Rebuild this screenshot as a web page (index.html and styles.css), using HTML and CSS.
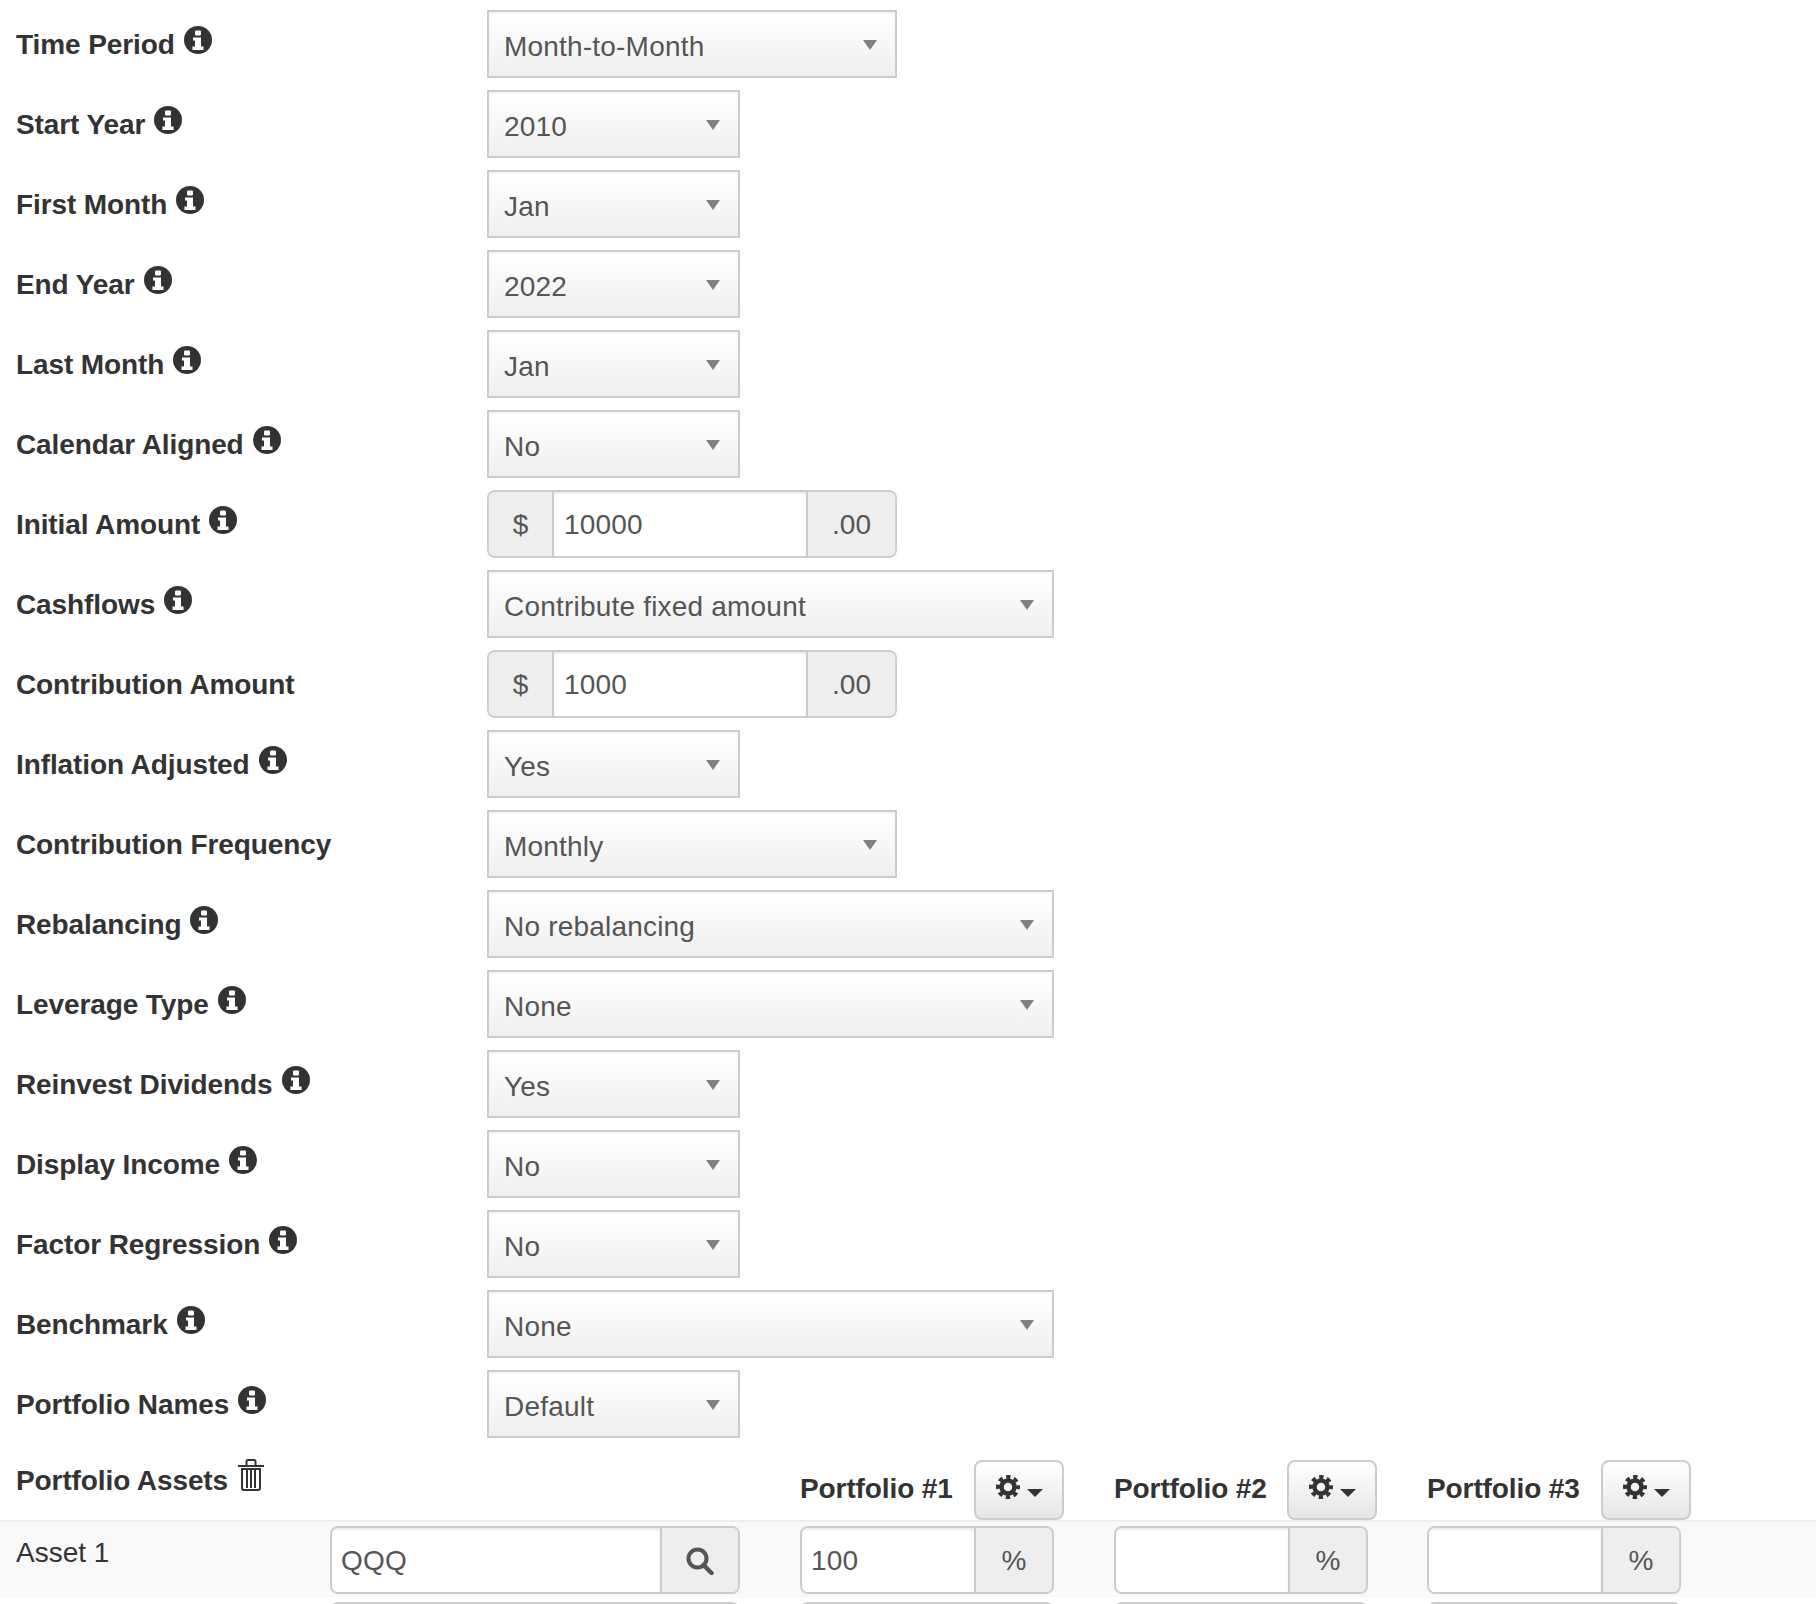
FILE: index.html
```html
<!DOCTYPE html>
<html lang="en">
<head>
    <meta charset="UTF-8">
    <title>Backtest Portfolio</title>
    <link rel="stylesheet" href="styles.css">
</head>
<body>
    <svg class="sprites" width="0" height="0">
        <symbol id="i-info" viewBox="0 0 28 28">
            <circle cx="14" cy="14" r="14" fill="#333"/>
            <rect x="11" y="4.500" width="6" height="5" rx="1" fill="#fff"/>
            <path d="M9 11.500h8v9h2.500v3.500h-11v-3.500H11v-6H9z" fill="#fff"/>
        </symbol>
        <symbol id="i-cog" viewBox="0 0 24 24">
            <circle cx="12" cy="12" r="6.500" fill="none" stroke="#333" stroke-width="4.500"/>
            <circle cx="12" cy="12" r="10" fill="none" stroke="#333" stroke-width="4" stroke-dasharray="4.300 3.554" stroke-dashoffset="2.150"/>
        </symbol>
        <symbol id="i-search" viewBox="0 0 28 28">
            <circle cx="11.500" cy="11.500" r="9" fill="none" stroke="#555" stroke-width="4"/>
            <path d="M17.500 18l8 8" stroke="#555" stroke-width="4.500" stroke-linecap="round"/>
        </symbol>
        <symbol id="i-trash" viewBox="0 0 26 32">
            <path d="M0 7h26M8.500 6V2.500a1.500 1.500 0 0 1 1.500-1.500h6a1.500 1.500 0 0 1 1.500 1.500V6" fill="none" stroke="#333" stroke-width="2"/>
            <path d="M4 10v19a2 2 0 0 0 2 2h14a2 2 0 0 0 2-2V10zM9 11v18M13 11v18M17 11v18" fill="none" stroke="#333" stroke-width="2"/>
        </symbol>
    </svg>

    <form class="backtest-form">
        <div class="form-row">
            <label class="row-label">Time Period <svg class="icon-info"><use href="#i-info"/></svg></label>
            <div class="select-box size-md"><select><option>Month-to-Month</option></select></div>
        </div>
        <div class="form-row">
            <label class="row-label">Start Year <svg class="icon-info"><use href="#i-info"/></svg></label>
            <div class="select-box size-sm"><select><option>2010</option></select></div>
        </div>
        <div class="form-row">
            <label class="row-label">First Month <svg class="icon-info"><use href="#i-info"/></svg></label>
            <div class="select-box size-sm"><select><option>Jan</option></select></div>
        </div>
        <div class="form-row">
            <label class="row-label">End Year <svg class="icon-info"><use href="#i-info"/></svg></label>
            <div class="select-box size-sm"><select><option>2022</option></select></div>
        </div>
        <div class="form-row">
            <label class="row-label">Last Month <svg class="icon-info"><use href="#i-info"/></svg></label>
            <div class="select-box size-sm"><select><option>Jan</option></select></div>
        </div>
        <div class="form-row">
            <label class="row-label">Calendar Aligned <svg class="icon-info"><use href="#i-info"/></svg></label>
            <div class="select-box size-sm"><select><option>No</option></select></div>
        </div>
        <div class="form-row">
            <label class="row-label">Initial Amount <svg class="icon-info"><use href="#i-info"/></svg></label>
            <div class="input-group size-md">
                <span class="addon addon-dollar">$</span>
                <input type="text" class="amount" value="10000">
                <span class="addon addon-cents">.00</span>
            </div>
        </div>
        <div class="form-row">
            <label class="row-label">Cashflows <svg class="icon-info"><use href="#i-info"/></svg></label>
            <div class="select-box size-lg"><select><option>Contribute fixed amount</option></select></div>
        </div>
        <div class="form-row">
            <label class="row-label">Contribution Amount</label>
            <div class="input-group size-md">
                <span class="addon addon-dollar">$</span>
                <input type="text" class="amount" value="1000">
                <span class="addon addon-cents">.00</span>
            </div>
        </div>
        <div class="form-row">
            <label class="row-label">Inflation Adjusted <svg class="icon-info"><use href="#i-info"/></svg></label>
            <div class="select-box size-sm"><select><option>Yes</option></select></div>
        </div>
        <div class="form-row">
            <label class="row-label">Contribution Frequency</label>
            <div class="select-box size-md"><select><option>Monthly</option></select></div>
        </div>
        <div class="form-row">
            <label class="row-label">Rebalancing <svg class="icon-info"><use href="#i-info"/></svg></label>
            <div class="select-box size-lg"><select><option>No rebalancing</option></select></div>
        </div>
        <div class="form-row">
            <label class="row-label">Leverage Type <svg class="icon-info"><use href="#i-info"/></svg></label>
            <div class="select-box size-lg"><select><option>None</option></select></div>
        </div>
        <div class="form-row">
            <label class="row-label">Reinvest Dividends <svg class="icon-info"><use href="#i-info"/></svg></label>
            <div class="select-box size-sm"><select><option>Yes</option></select></div>
        </div>
        <div class="form-row">
            <label class="row-label">Display Income <svg class="icon-info"><use href="#i-info"/></svg></label>
            <div class="select-box size-sm"><select><option>No</option></select></div>
        </div>
        <div class="form-row">
            <label class="row-label">Factor Regression <svg class="icon-info"><use href="#i-info"/></svg></label>
            <div class="select-box size-sm"><select><option>No</option></select></div>
        </div>
        <div class="form-row">
            <label class="row-label">Benchmark <svg class="icon-info"><use href="#i-info"/></svg></label>
            <div class="select-box size-lg"><select><option>None</option></select></div>
        </div>
        <div class="form-row">
            <label class="row-label">Portfolio Names <svg class="icon-info"><use href="#i-info"/></svg></label>
            <div class="select-box size-sm"><select><option>Default</option></select></div>
        </div>

        <div class="assets-head">
            <div class="assets-title">Portfolio Assets <svg class="icon-trash"><use href="#i-trash"/></svg></div>
            <div class="portfolio-head">
                <span class="portfolio-name">Portfolio #1</span>
                <button type="button" class="btn-cog"><svg class="icon-cog"><use href="#i-cog"/></svg><span class="caret"></span></button>
            </div>
            <div class="portfolio-head">
                <span class="portfolio-name">Portfolio #2</span>
                <button type="button" class="btn-cog"><svg class="icon-cog"><use href="#i-cog"/></svg><span class="caret"></span></button>
            </div>
            <div class="portfolio-head">
                <span class="portfolio-name">Portfolio #3</span>
                <button type="button" class="btn-cog"><svg class="icon-cog"><use href="#i-cog"/></svg><span class="caret"></span></button>
            </div>
        </div>

        <div class="asset-row striped">
            <div class="asset-cell">
                <span class="asset-name">Asset 1</span>
                <div class="input-group asset-search">
                    <input type="text" value="QQQ">
                    <span class="addon addon-search"><svg class="icon-search"><use href="#i-search"/></svg></span>
                </div>
            </div>
            <div class="input-group alloc"><input type="text" value="100"><span class="addon addon-pct">%</span></div>
            <div class="input-group alloc"><input type="text"><span class="addon addon-pct">%</span></div>
            <div class="input-group alloc"><input type="text"><span class="addon addon-pct">%</span></div>
        </div>
        <!-- next row runs off the bottom of the page, only its top edge shows -->
        <div class="asset-row">
            <div class="asset-cell">
                <span class="asset-name"></span>
                <div class="input-group asset-search"></div>
            </div>
            <div class="input-group alloc"></div>
            <div class="input-group alloc"></div>
            <div class="input-group alloc"></div>
        </div>
    </form>
</body>
</html>
```

FILE: styles.css
```css
html,
body {
    height: 1604px;
    overflow: hidden;
}
body {
    margin: 0;
    background: #fff;
    color: #333;
    font-family: "Liberation Sans", Arial, sans-serif;
    font-size: 28px;
}
.sprites {
    position: absolute;
}
.backtest-form {
    padding-top: 10px;
}

/* form rows */
.form-row {
    display: grid;
    grid-template-columns: 487px 1fr;
    height: 68px;
    margin-bottom: 12px;
}
.row-label {
    display: flex;
    align-items: flex-start;
    gap: 9px;
    padding: 15px 0 0 16px;
    font-weight: 700;
    line-height: 40px;
    letter-spacing: -0.1px;
    white-space: nowrap;
}
.icon-info {
    flex: none;
    width: 28px;
    height: 28px;
    margin-top: 1px;
}

/* selects */
.size-sm { width: 253px; }
.size-md { width: 410px; }
.size-lg { width: 567px; }
.select-box {
    position: relative;
    height: 68px;
}
.select-box::after {
    content: "";
    position: absolute;
    top: 30px;
    right: 20px;
    border-style: solid;
    border-width: 10px 7px 0;
    border-color: #808080 transparent transparent;
}
.select-box select {
    display: block;
    width: 100%;
    height: 100%;
    padding: 4px 40px 0 15px;
    border: 2px solid #ccc;
    border-radius: 0;
    appearance: none;
    background: linear-gradient(to bottom, #fff, #f0f0f0);
    box-shadow: inset 0 2px 2px rgba(0, 0, 0, 0.04);
    color: #555;
    font-family: inherit;
    font-size: 28px;
    letter-spacing: 0.2px;
}

/* input groups */
.input-group {
    display: flex;
    box-sizing: border-box;
    height: 68px;
    border: 2px solid #ccc;
    border-radius: 8px;
    overflow: hidden;
    background: #fff;
}
.input-group input {
    flex: 1;
    min-width: 0;
    padding: 2px 9px 0;
    border: 0;
    box-shadow: inset 0 2px 2px rgba(0, 0, 0, 0.075);
    color: #555;
    font-family: inherit;
    font-size: 28px;
    letter-spacing: 0.2px;
}
.input-group .amount {
    padding-left: 10px;
}
.addon {
    display: flex;
    flex: none;
    align-items: center;
    justify-content: center;
    box-sizing: border-box;
    padding-top: 2px;
    background: #eee;
    color: #555;
    font-size: 28px;
}
.addon-dollar {
    width: 65px;
    border-right: 2px solid #ccc;
}
.addon-cents {
    width: 89px;
    border-left: 2px solid #ccc;
}
.addon-pct {
    width: 78px;
    border-left: 2px solid #ccc;
}
.addon-search {
    width: 78px;
    border-left: 2px solid #ccc;
}
.icon-search {
    width: 28px;
    height: 28px;
}

/* portfolio table */
.assets-head {
    display: grid;
    grid-template-columns: 800px 314px 313px 1fr;
    height: 60px;
    margin-top: 22px;
    border-bottom: 2px solid #eee;
    box-sizing: content-box;
}
.assets-title {
    display: flex;
    align-items: flex-start;
    gap: 10px;
    padding: 1px 0 0 16px;
    font-weight: 700;
    line-height: 40px;
    letter-spacing: -0.1px;
}
.icon-trash {
    flex: none;
    width: 26px;
    height: 32px;
    margin-top: -2px;
}
.portfolio-head {
    display: flex;
    align-items: flex-start;
    font-weight: 700;
}
.portfolio-name {
    width: 174px;
    padding-top: 9px;
    line-height: 40px;
    letter-spacing: -0.1px;
    white-space: nowrap;
}
.portfolio-head:nth-child(3) .portfolio-name {
    width: 173px;
}
.btn-cog {
    display: flex;
    align-items: center;
    justify-content: center;
    gap: 7px;
    box-sizing: border-box;
    width: 90px;
    height: 60px;
    padding: 0;
    border: 2px solid #ccc;
    border-radius: 8px;
    background: linear-gradient(to bottom, #fff, #e6e6e6);
}
.icon-cog {
    width: 24px;
    height: 24px;
    margin-top: -6px;
}
.caret {
    margin-top: 6px;
    border-style: solid;
    border-width: 8px 8px 0;
    border-color: #333 transparent transparent;
}
.asset-row {
    display: grid;
    grid-template-columns: 800px 314px 313px 254px;
    box-sizing: border-box;
    height: 80px;
    padding-top: 4px;
}
.striped {
    height: 76px;
    background: #f9f9f9;
}
.asset-cell {
    display: flex;
    align-items: flex-start;
}
.asset-name {
    width: 330px;
    padding: 7px 0 0 16px;
    box-sizing: border-box;
    line-height: 40px;
}
.asset-search {
    width: 410px;
}
.alloc {
    width: 254px;
}
```
